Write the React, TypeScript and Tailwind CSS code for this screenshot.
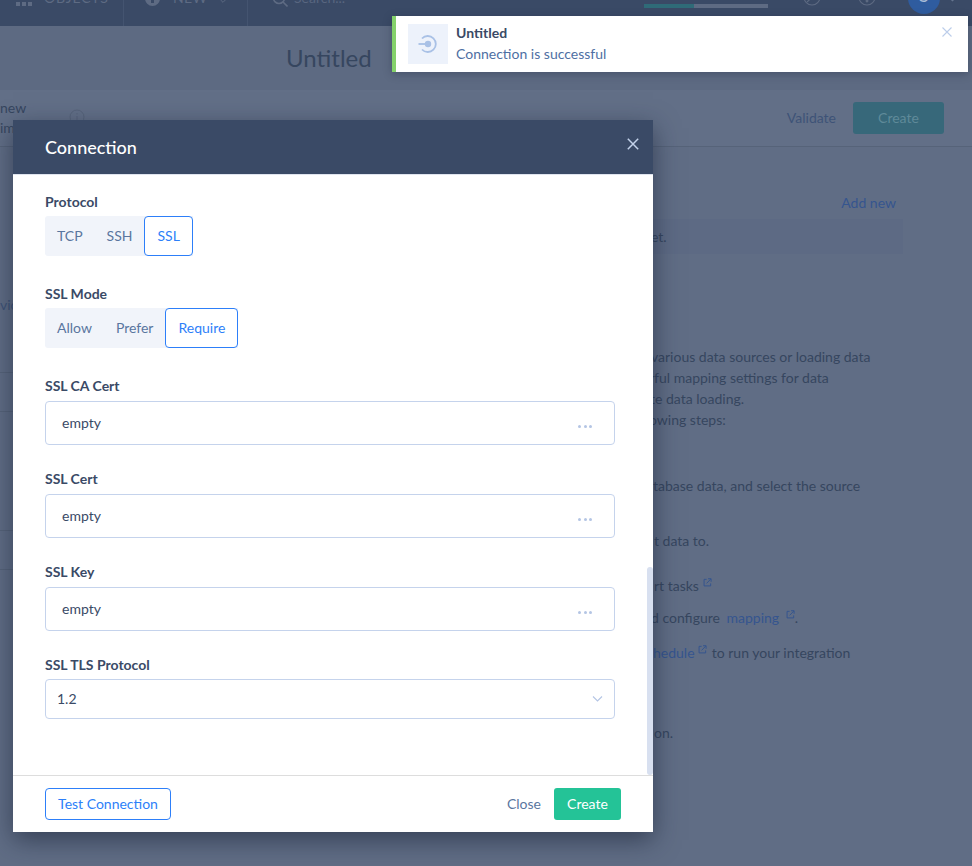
import React from "react";

const font = { fontFamily: "Lato, 'Liberation Sans', sans-serif" };

function Ext({ className = "" }: { className?: string }) {
  return (
    <svg viewBox="0 0 10 10" className={`inline-block w-[9px] h-[9px] ${className}`} fill="none" stroke="#35558f" strokeWidth="1.1">
      <path d="M4 1.5H1.2v7.3h7.3V6" />
      <path d="M4 6l4.6-4.8M5.6 .8h3.4v3.4" />
    </svg>
  );
}

function Seg({ items, active }: { items: string[]; active: string }) {
  return (
    <div className="flex h-10 w-fit bg-[#f1f4fa] rounded-l-[3px] mt-1">
      {items.map((t) =>
        t === active ? (
          <div key={t} className="flex items-center px-3 border border-[#2d7ff9] bg-white text-[#2d7ff9] rounded-[4px] text-sm">
            {t}
          </div>
        ) : (
          <div key={t} className="flex items-center px-3 text-[#5a769f] text-sm">
            {t}
          </div>
        )
      )}
    </div>
  );
}

function Label({ children, className = "" }: { children: React.ReactNode; className?: string }) {
  return <div className={`h-5 leading-5 text-sm font-bold text-[#3a4a66] ${className}`}>{children}</div>;
}

function Field({ label, first }: { label: string; first?: boolean }) {
  return (
    <div className={first ? "mt-7" : "mt-6"}>
      <Label>{label}</Label>
      <div className="mt-[5px] h-11 flex items-center justify-between pl-4 pr-[22px] border border-[#c5d3ec] rounded-[4px] text-sm text-[#3a4a66]">
        <span>empty</span>
        <span className="flex gap-[2.5px] mt-[6px]">
          <i className="w-[3px] h-[3px] rounded-full bg-[#b4c5e4]" />
          <i className="w-[3px] h-[3px] rounded-full bg-[#b4c5e4]" />
          <i className="w-[3px] h-[3px] rounded-full bg-[#b4c5e4]" />
        </span>
      </div>
    </div>
  );
}

function Background() {
  const line = "h-[21px] leading-[21px] whitespace-nowrap text-sm text-[#36465f]";
  return (
    <div className="w-[972px] h-[866px] overflow-hidden bg-[#606d85] text-[#36465f]">
      {/* top bar */}
      <div className="h-[26px] bg-[#3a4a66] flex items-end overflow-hidden relative">
        <div className="flex items-end h-[26px] w-[124px] border-r border-[#445470] pl-4">
          <div className="grid grid-cols-3 gap-[2px] w-4 mb-5">
            {Array.from({ length: 3 }).map((_, i) => (
              <i key={i} className="w-1 h-1 bg-[#5e6b83]" />
            ))}
          </div>
          <span className="ml-3 text-sm tracking-[0.8px] text-[#5e6b83] leading-none mb-[21px]">OBJECTS</span>
        </div>
        <div className="flex items-end h-[26px] w-[124px] border-r border-[#445470] pl-[21px]">
          <div className="relative w-[15px] h-[15px] rounded-full bg-[#5e6b83] mb-[20px]">
            <i className="absolute left-[6px] top-[8px] w-[3px] h-[4px] bg-[#3a4a66]" />
          </div>
          <span className="ml-[13px] text-sm tracking-wide text-[#5e6b83] leading-none mb-[21px]">NEW</span>
          <svg viewBox="0 0 10 6" className="w-2 h-1 ml-3 mb-[23px]" fill="none" stroke="#5e6b83" strokeWidth="1.4"><path d="M1 1l4 4 4-4" /></svg>
        </div>
        <div className="flex items-end h-[26px] pl-6">
          <svg viewBox="0 0 16 16" className="w-4 h-4 mb-[19px]" fill="none" stroke="#5e6b83" strokeWidth="1.6"><circle cx="7" cy="7" r="5.5" /><path d="M11 11l4.5 4.5" /></svg>
          <span className="ml-[6px] text-sm text-[#586680] leading-none mb-[21px]">Search...</span>
        </div>
        <div className="ml-[299px] flex items-start h-[26px] pt-1">
          <div className="w-[50px] h-1 bg-[#2f6b78]" />
          <div className="w-[74px] h-1 bg-[#5e6b83]" />
        </div>
        <svg viewBox="0 0 18 18" className="absolute left-[803px] -top-[12px] w-[18px] h-[18px]" fill="none" stroke="#5e6b83" strokeWidth="1.1"><circle cx="9" cy="9" r="8" /><path d="M4 14L14 5" /></svg>
        <svg viewBox="0 0 18 18" className="absolute left-[858px] -top-[12px] w-[18px] h-[18px]" fill="none" stroke="#5e6b83" strokeWidth="1.1"><circle cx="9" cy="9" r="8" /><circle cx="9" cy="13" r=".9" fill="#5e6b83" /></svg>
        <div className="absolute left-[908px] -top-[18px] w-8 h-8 rounded-full bg-[#2f5c9f] flex items-end justify-center">
          <span className="text-white/60 text-lg leading-none mb-[10px]">S</span>
        </div>
        <svg viewBox="0 0 10 6" className="absolute left-[949px] -top-[3px] w-[7px] h-[5px]" fill="none" stroke="#7b8aa5" strokeWidth="1.4"><path d="M1 1l4 4 4-4" /></svg>
      </div>
      {/* title */}
      <div className="h-[64px] bg-[#5d6a82] flex items-center pl-[286px]">
        <span className="text-2xl text-[#36465f]">Untitled</span>
      </div>
      {/* toolbar */}
      <div className="h-[57px] bg-[#626f87] border-b border-[#566379] flex items-center pr-7 text-sm">
        <div className="leading-5 w-7 -mt-[1px]">
          <div>new</div>
          <div>ime</div>
        </div>
        <svg viewBox="0 0 16 16" className="w-4 h-4 ml-[41px] -mt-[2px]" fill="none" stroke="#56637a"><circle cx="8" cy="8" r="7" /><path d="M8 7v5M8 4v1.4" /></svg>
        <span className="ml-auto text-[#3e5377]">Validate</span>
        <div className="ml-[17px] w-[91px] h-8 rounded-[3px] bg-[#37687a] text-[#5f8a99] flex items-center justify-center">Create</div>
      </div>
      {/* content */}
      <div className="flex">
        <div className="w-[13px] shrink-0 overflow-hidden text-sm text-[#3e5377]">
          <div className="mt-[148px] h-5 leading-5 whitespace-nowrap">vice</div>
          <div className="h-[58px] border-b border-[#566379]" />
          <div className="h-[39px] border-b border-[#566379]" />
          <div className="h-[119px] border-b border-[#566379]" />
          <div className="h-[39px] border-b border-[#566379]" />
        </div>
        <div className="flex-1 min-w-0">
          <div className="flex justify-end pr-[76px] pt-[46px] text-sm">
            <span className="text-[#35558f] leading-5">Add new</span>
          </div>
          <div className="mt-[6px] ml-[627px] mr-[69px] h-[35px] bg-[#5d6a84] flex items-center pl-[11px] text-sm">
            <span>et.</span>
          </div>
          <div className="h-[92px]" />
          <div className={`${line} pl-[638px]`}>various data sources or loading data</div>
          <div className={`${line} pl-[636px]`}>rful mapping settings for data</div>
          <div className={`${line} pl-[637px]`}>te data loading.</div>
          <div className={`${line} pl-[636px]`}>owing steps:</div>
          <div className="h-[45px]" />
          <div className={`${line} pl-[640px] text-[#3c4c69]`}>tabase data, and select the source</div>
          <div className="h-[34px]" />
          <div className={`${line} pl-[641px]`}>t data to.</div>
          <div className="h-[24px]" />
          <div className={`${line} pl-[641px] text-[#35558f]`}>
            rt tasks <Ext className="-translate-y-[5px]" />
          </div>
          <div className="h-[11px]" />
          <div className={`${line} pl-[638px]`}>
            d configure <span className="ml-[3px] text-[#35558f]">mapping</span> <Ext className="ml-[3px] -translate-y-[5px]" />.
          </div>
          <div className="h-[14px]" />
          <div className={`${line} pl-[640px]`}>
            <span className="text-[#35558f]">hedule</span> <Ext className="-translate-y-[5px]" /> <span className="ml-[1px]">to run your integration</span>
          </div>
          <div className="h-[59px]" />
          <div className={`${line} pl-[641px]`}>on.</div>
        </div>
      </div>
    </div>
  );
}

export default function App() {
  return (
    <div className="relative w-[972px] h-[866px] overflow-hidden" style={font}>
      <Background />

      {/* Toast */}
      <div className="absolute left-[392px] top-4 w-[576px] h-14 bg-white border-l-4 border-[#84d16b] shadow-[0_2px_8px_rgba(30,40,60,0.35)] flex items-center pl-3">
        <div className="w-10 h-10 bg-[#edf2fb] flex items-center justify-center">
          <svg viewBox="0 0 20 20" className="w-5 h-5" fill="none" stroke="#a9c1e6" strokeWidth="1.8">
            <path d="M4 4.5a8 8 0 1 1 0 11" />
            <path d="M0.5 10H8" />
            <circle cx="10" cy="10" r="3.2" fill="#a9c1e6" stroke="none" />
          </svg>
        </div>
        <div className="ml-2 text-sm -mt-[2px]">
          <div className="font-bold text-[#3a4a66] leading-[21px]">Untitled</div>
          <div className="text-[#4e6fa3] leading-[21px]">Connection is successful</div>
        </div>
        <svg viewBox="0 0 10 10" className="absolute right-[16px] top-[11px] w-[10px] h-[10px]" fill="none" stroke="#bccdea" strokeWidth="1.1">
          <path d="M.5.5l9 9M9.5.5l-9 9" />
        </svg>
      </div>

      {/* Modal */}
      <div className="absolute left-[13px] top-[120px] w-[640px] h-[712px] bg-white flex flex-col shadow-[0_8px_24px_rgba(25,35,55,0.6)]">
        <div className="h-[55px] shrink-0 bg-[#3a4a66] border-b border-[#dfe4ee] flex items-center justify-between pl-8 pr-[14px]">
          <span className="text-white text-lg font-medium">Connection</span>
          <svg viewBox="0 0 12 12" className="w-3 h-3 -mt-[6px]" fill="none" stroke="#c3d2ea" strokeWidth="1.5">
            <path d="M.8.8l10.4 10.4M11.2.8L.8 11.2" />
          </svg>
        </div>
        <div className="relative flex-1 pt-[17px] px-8 pr-[38px] overflow-hidden">
          <Label>Protocol</Label>
          <Seg items={["TCP", "SSH", "SSL"]} active="SSL" />
          <Label className="mt-7">SSL Mode</Label>
          <Seg items={["Allow", "Prefer", "Require"]} active="Require" />
          <Field label="SSL CA Cert" first />
          <Field label="SSL Cert" />
          <Field label="SSL Key" />
          <div className="mt-6">
            <Label>SSL TLS Protocol</Label>
            <div className="mt-1 h-10 flex items-center justify-between pl-[11px] pr-[11px] border border-[#c5d3ec] rounded-[4px] text-sm text-[#3a4a66]">
              <span>1.2</span>
              <svg viewBox="0 0 10 6" className="w-[11px] h-[6px]" fill="none" stroke="#b4c5e4" strokeWidth="1.1"><path d="M.5.5L5 5 9.5.5" /></svg>
            </div>
          </div>
          <div className="absolute right-0 top-[392px] bottom-0 w-[6px] rounded-[3px] bg-[#d8e0f0]" />
        </div>
        <div className="h-[57px] shrink-0 border-t border-[#dddddd] flex items-center pl-8 pr-8 text-sm">
          <button className="h-8 w-[126px] border border-[#2d7ff9] rounded-[4px] text-[#2d7ff9]">Test Connection</button>
          <span className="ml-auto text-[#5a769f]">Close</span>
          <button className="ml-[13px] h-8 w-[67px] rounded-[3px] bg-[#24c397] text-white">Create</button>
        </div>
      </div>
    </div>
  );
}
